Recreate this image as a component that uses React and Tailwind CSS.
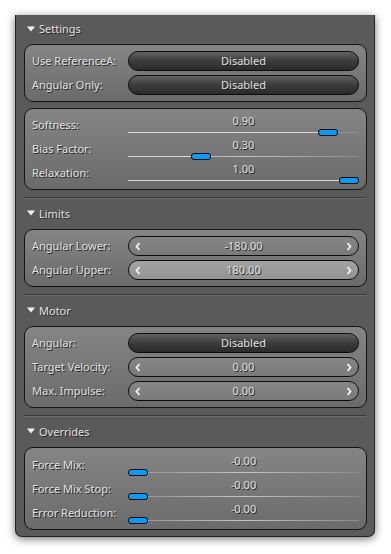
import React from "react";

const txt = "[text-shadow:1px_1px_0_#262626] text-[#e2e2e2]";

const Triangle = () => (
  <svg width="8" height="6" viewBox="0 0 8 6" className="mr-[4px]">
    <polygon points="0,0.5 8,0.5 4,5.5" fill="#f2f2f2" />
  </svg>
);

const Header = ({ title, h }) => (
  <div className={`flex items-center pb-[2px] pl-[11px] ${h}`}>
    <Triangle />
    <span className={`${txt} leading-none`}>{title}</span>
  </div>
);

const Separator = () => (
  <div className="mx-[8px] h-[2px] border-t border-[#3a3a3a] bg-[#6c6c6c]" />
);

const Box = ({ children, className = "" }) => (
  <div
    className={`ml-[8px] mr-[7px] rounded-[9px] border border-[#141414] bg-linear-to-b from-[#858585] to-[#6b6b6b] pl-[7px] pr-[7px] ${className}`}
  >
    {children}
  </div>
);

const Label = ({ children }) => (
  <div className={`w-[96px] shrink-0 ${txt}`}>{children}</div>
);

const ButtonRow = ({ label, value }) => (
  <div className="flex h-[20px] items-center">
    <Label>{label}</Label>
    <div
      className={`flex h-[20px] flex-1 items-center justify-center rounded-full border border-[#0c0c0c] bg-linear-to-b from-[#626262] via-[#3c3c3c] to-[#2b2b2b] ${txt}`}
    >
      {value}
    </div>
  </div>
);

const Chevron = ({ dir }) => (
  <svg width="6" height="9" viewBox="0 0 6 9">
    <path
      d={dir === "left" ? "M4.5 1 L1.5 4.5 L4.5 8" : "M1.5 1 L4.5 4.5 L1.5 8"}
      fill="none"
      stroke="#f4f4f4"
      strokeWidth="1.8"
    />
  </svg>
);

const SpinRow = ({ label, value, light }) => (
  <div className="flex h-[20px] items-center">
    <Label>{label}</Label>
    <div
      className={`flex h-[20px] flex-1 items-center justify-between rounded-full border border-[#0c0c0c] px-[6px] ${
        light
          ? "bg-linear-to-b from-[#a3a3a3] to-[#939393]"
          : "bg-linear-to-b from-[#868686] to-[#7a7a7a]"
      }`}
    >
      <Chevron dir="left" />
      <span className={txt}>{value}</span>
      <Chevron dir="right" />
    </div>
  </div>
);

const SliderRow = ({ label, value, pos }) => (
  <div className="flex h-[24px]">
    <div className="flex w-[96px] shrink-0 items-center pt-[2px]">
      <span className={txt}>{label}</span>
    </div>
    <div className="flex flex-1 flex-col pt-[2px]">
      <span className={`text-center leading-[14px] ${txt}`}>{value}</span>
      <div className="relative mt-[4px] h-[1px] bg-linear-to-r from-[#8e8e8e] via-[#c4c4c4] to-[#8a8a8a]">
        <div
          className="absolute left-0 top-0 h-[1px] bg-[#d8d8d8]"
          style={{ width: `${pos * 100}%` }}
        />
        <div
          className="absolute top-[-3px] h-[7px] w-[20px] rounded-[3px] border border-[#0a0a0a] bg-[#0a9bf6]"
          style={{ left: `calc(${pos} * (100% - 20px))` }}
        />
      </div>
    </div>
  </div>
);

export default function App() {
  return (
    <div className="min-h-[554px] bg-white pl-[15px] pt-[15px] font-['Noto_Sans',sans-serif] text-[11px]">
      <div className="w-[360px] rounded-b-[7px] border-x border-b border-[#232323] bg-[#5a5a5a] pb-[6px] shadow-[0_2px_9px_rgba(0,0,0,0.55)]">
        <Header title="Settings" h="h-[29px]" />
        <Box className="flex flex-col gap-[4px] py-[6px]">
          <ButtonRow label="Use ReferenceA:" value="Disabled" />
          <ButtonRow label="Angular Only:" value="Disabled" />
        </Box>
        <Box className="mt-[6px] pb-[5px] pt-[3px]">
          <SliderRow label="Softness:" value="0.90" pos={0.9} />
          <SliderRow label="Bias Factor:" value="0.30" pos={0.3} />
          <SliderRow label="Relaxation:" value="1.00" pos={1} />
        </Box>
        <div className="h-[7px]" />
        <Separator />

        <Header title="Limits" h="h-[30px]" />
        <Box className="flex flex-col gap-[4px] py-[6px]">
          <SpinRow label="Angular Lower:" value="-180.00" />
          <SpinRow label="Angular Upper:" value="180.00" light />
        </Box>
        <div className="h-[7px]" />
        <Separator />

        <Header title="Motor" h="h-[30px]" />
        <Box className="flex flex-col gap-[4px] py-[6px]">
          <ButtonRow label="Angular:" value="Disabled" />
          <SpinRow label="Target Velocity:" value="0.00" />
          <SpinRow label="Max. Impulse:" value="0.00" />
        </Box>
        <div className="h-[7px]" />
        <Separator />

        <Header title="Overrides" h="h-[30px]" />
        <Box className="pb-[5px] pt-[4px]">
          <SliderRow label="Force Mix:" value="-0.00" pos={0} />
          <SliderRow label="Force Mix Stop:" value="-0.00" pos={0} />
          <SliderRow label="Error Reduction:" value="-0.00" pos={0} />
        </Box>
      </div>
    </div>
  );
}
